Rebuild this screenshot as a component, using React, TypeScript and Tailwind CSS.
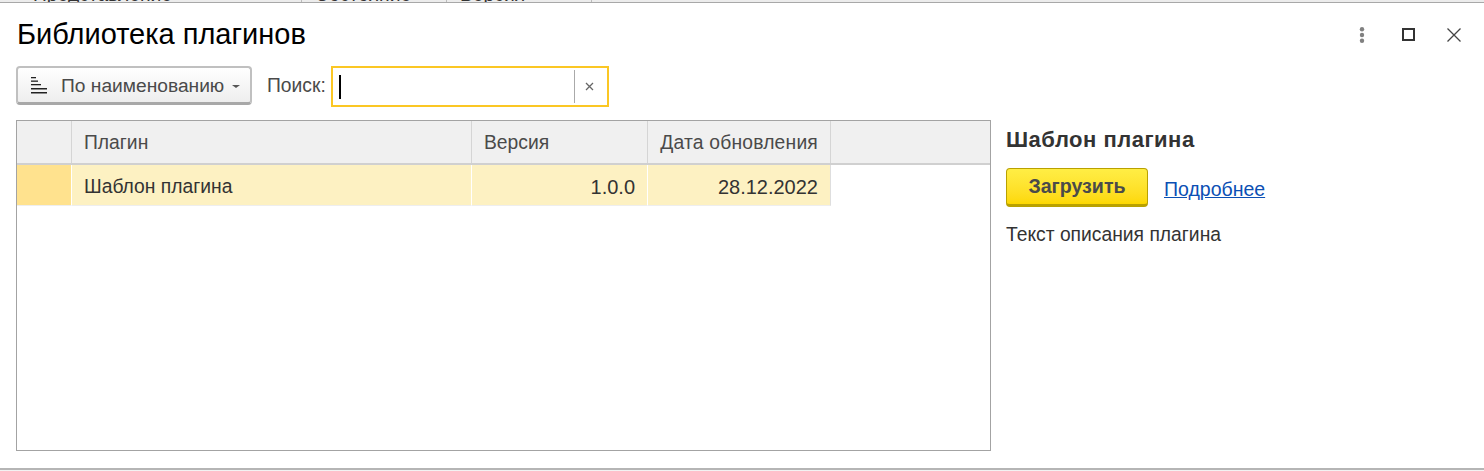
export default function App() {
  return (
    <div className="w-[1484px] h-[471px] bg-white overflow-hidden flex flex-col font-['Liberation_Sans',Arial,sans-serif] text-[#333]">
      <div className="h-[3px] shrink-0 bg-[#ececec] border-b border-[#a8a8a8] overflow-hidden flex text-[19.3px] leading-[22px] text-[#333]">
        <div className="w-[302px] border-r border-[#bbb] pl-[33px] -mt-[16px] h-[22px] whitespace-nowrap">Представление</div>
        <div className="w-[145px] border-r border-[#bbb] pl-[13px] -mt-[16px] h-[22px] whitespace-nowrap">Состояние</div>
        <div className="w-[145px] border-r border-[#bbb] pl-[13px] -mt-[16px] h-[22px] whitespace-nowrap">Версия</div>
      </div>
      <div className="flex-1 flex flex-col pl-4 pr-[18px]">
        <div className="h-[63px] shrink-0 flex items-center justify-between">
          <h1 className="text-[29px] text-black font-normal leading-none ml-[1px] -mt-[1px]">Библиотека плагинов</h1>
          <div className="flex items-center mr-[5px]">
            <svg width="6" height="16" viewBox="0 0 6 16"><circle cx="3" cy="2.3" r="2.2" fill="#808080"/><circle cx="3" cy="8" r="2.2" fill="#808080"/><circle cx="3" cy="13.7" r="2.2" fill="#808080"/></svg>
            <div className="ml-[37px] w-[13px] h-[13px] border-2 border-[#333]" />
            <svg className="ml-[32px]" width="14" height="14" viewBox="0 0 14 14" stroke="#444" strokeWidth="1.3"><path d="M0.5 0.5 13.5 13.5M13.5 0.5 0.5 13.5"/></svg>
          </div>
        </div>
        <div className="h-[41px] shrink-0 flex items-start">
          <button className="w-[236px] h-[39px] rounded-[4px] border-2 border-[#c0c0c0] border-b-[3px] border-b-[#a8a8a8] bg-gradient-to-b from-white to-[#eeeeee] flex items-center pl-[13px] text-[19.2px] text-[#4a4a4a]">
            <svg width="16" height="17" viewBox="0 0 16 17" fill="#222"><rect x="0" y="0" width="5" height="1.3"/><rect x="0" y="3.5" width="7" height="1.3"/><rect x="0" y="7" width="10" height="1.3"/><rect x="0" y="11" width="16" height="1.5"/><rect x="0" y="15" width="16" height="1.5"/></svg>
            <span className="ml-[14px] mt-[3px]">По наименованию</span>
            <span className="ml-[8px] mt-[3px] w-0 h-0 border-x-[4px] border-x-transparent border-t-[3px] border-t-[#555]" />
          </button>
          <span className="ml-[15px] mt-[9px] text-[19.3px] leading-[22px] text-[#4a4a4a]">Поиск:</span>
          <div className="ml-[5px] w-[278px] h-[41px] border-2 border-[#fbc724] flex items-center">
            <div className="ml-[6px] w-[2px] h-[24px] bg-black" />
            <div className="flex-1" />
            <div className="w-[33px] h-[33px] border-l border-[#aaa] flex items-center justify-center pr-[2px]">
              <svg width="9" height="9" viewBox="0 0 9 9" stroke="#666" strokeWidth="1.3"><path d="M1 1 8 8M8 1 1 8"/></svg>
            </div>
          </div>
        </div>
        <div className="flex mt-[13px] h-[331px]">
          <div className="w-[975px] h-full border border-[#a3a3a3] flex flex-col text-[19.3px]">
            <div className="h-[44px] flex bg-[#f0f0f0] border-b-2 border-[#d0d0d0] text-[#4a4a4a] shrink-0">
              <div className="w-[55px] border-r border-[#d5d5d5]" />
              <div className="w-[400px] border-r border-[#d5d5d5] pl-[12px] pt-[2px] flex items-center">Плагин</div>
              <div className="w-[176px] border-r border-[#d5d5d5] pl-[12px] pt-[2px] flex items-center">Версия</div>
              <div className="w-[183px] border-r border-[#d5d5d5] pr-[12px] pt-[2px] flex items-center justify-end whitespace-nowrap tracking-[0.2px]">Дата обновления</div>
            </div>
            <div className="h-[41px] flex shrink-0">
              <div className="w-[55px] bg-[#ffe28e] border-r border-b border-r-white border-b-[#eeeeee]" />
              <div className="w-[400px] bg-[#fdf1c2] border-r border-b border-r-white border-b-[#eeeeee] pl-[12px] pt-[4px] flex items-center text-[#333]">Шаблон плагина</div>
              <div className="w-[176px] bg-[#fdf1c2] border-r border-b border-r-white border-b-[#eeeeee] pr-[12px] pt-[4px] flex items-center justify-end text-[20px]">1.0.0</div>
              <div className="w-[183px] bg-[#fdf1c2] border-r border-b border-r-[#dedede] border-b-[#eeeeee] pr-[12px] pt-[4px] flex items-center justify-end text-[20px]">28.12.2022</div>
            </div>
          </div>
          <div className="ml-[15px] flex flex-col items-start">
            <div className="mt-[6px] text-[22px] font-bold leading-[28px] text-[#333] tracking-[0.5px]">Шаблон плагина</div>
            <div className="mt-[14px] flex items-center">
              <button className="w-[142px] h-[39px] rounded-[4px] border border-[#b9a100] border-b-[3px] bg-gradient-to-b from-[#ffee44] to-[#fdd800] text-[19.6px] font-bold text-[#4a4a4a]">Загрузить</button>
              <a className="ml-[16px] mt-[5px] text-[19.5px] text-[#0b4fb4] underline">Подробнее</a>
            </div>
            <div className="mt-[17px] text-[19.3px] text-[#333] leading-[22px]">Текст описания плагина</div>
          </div>
        </div>
      </div>
      <div className="h-[3px] shrink-0 border-t-2 border-[#b5b5b5] bg-[#f2f2f2]" />
    </div>
  );
}
